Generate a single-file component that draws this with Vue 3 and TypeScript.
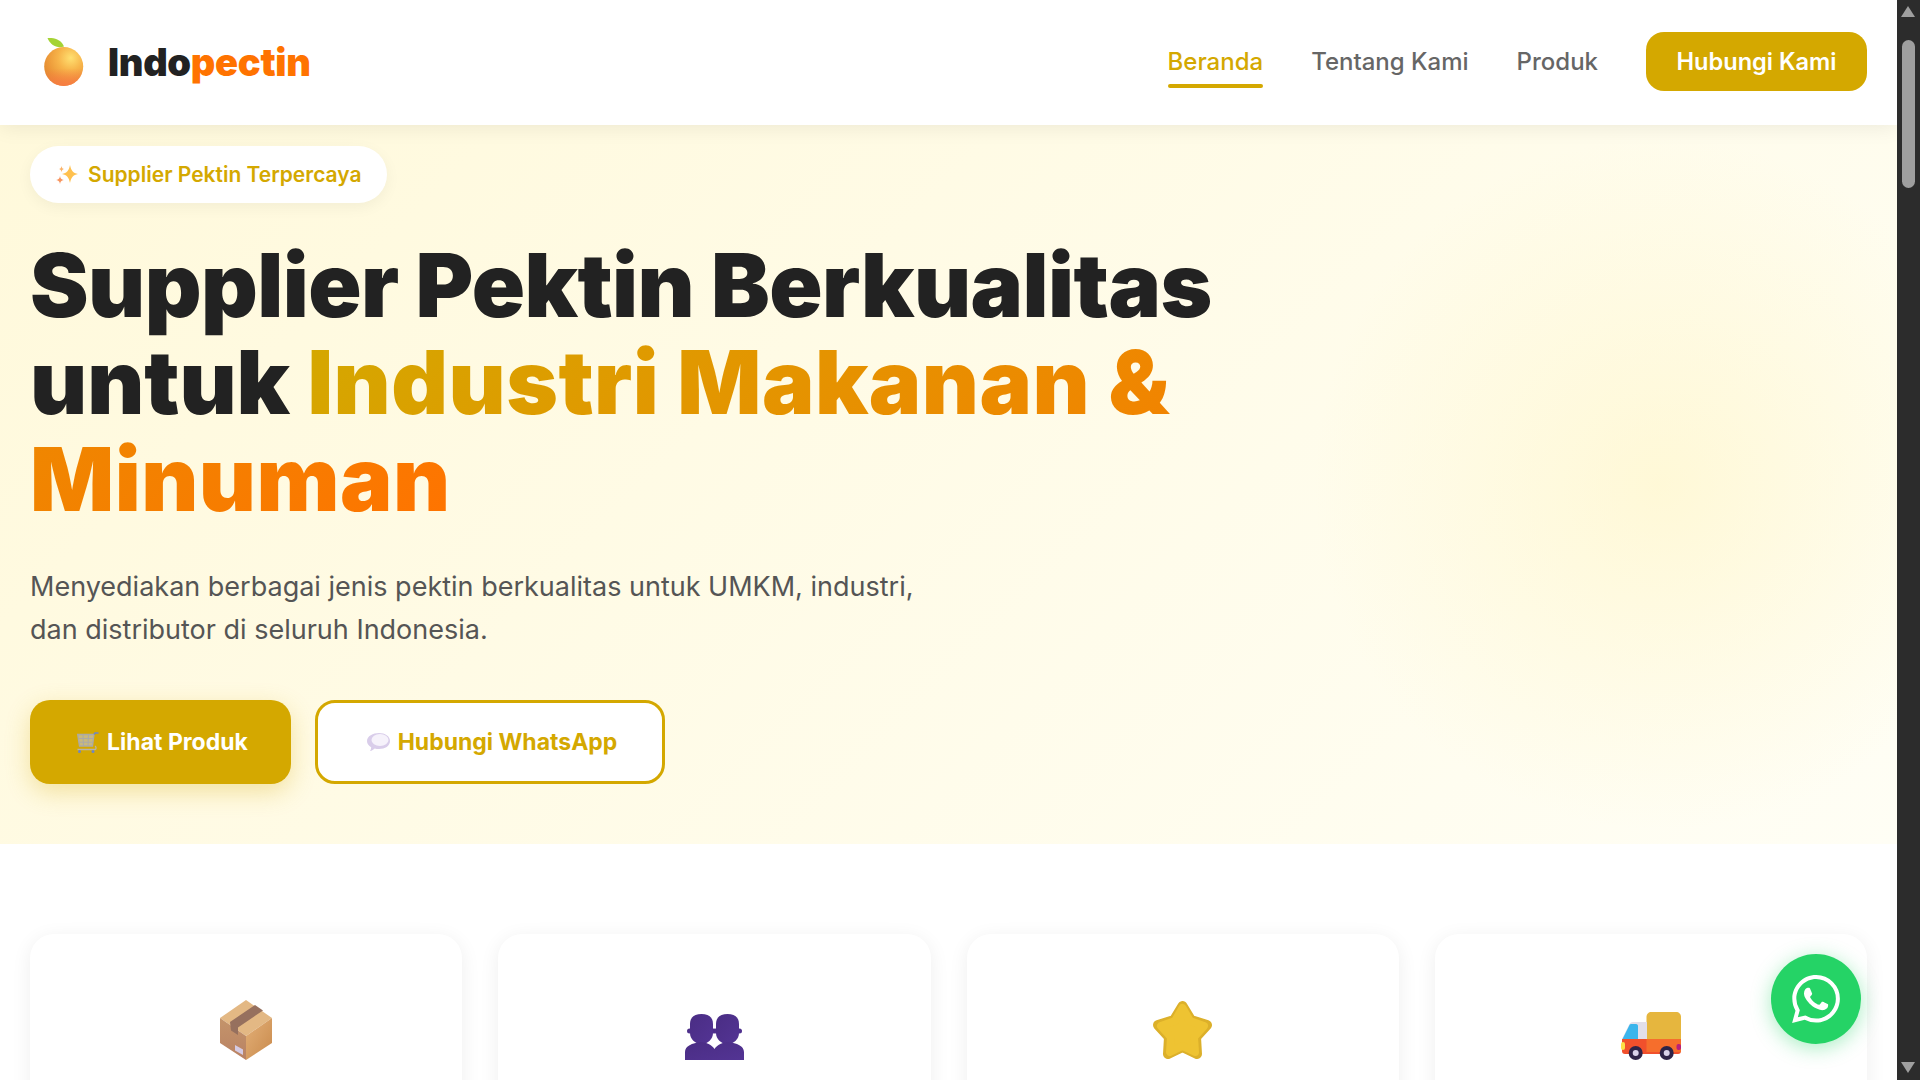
<script setup lang="ts">
const navLinks = [
  { label: 'Beranda', active: true },
  { label: 'Tentang Kami', active: false },
  { label: 'Produk', active: false },
]
</script>

<template>
  <div class="shell">
    <main class="page">
      <header class="navbar">
        <a class="logo">
          <svg class="logo-icon" viewBox="0 0 40 48">
            <defs>
              <radialGradient id="orangeFill" cx="0.68" cy="0.28" r="0.8">
                <stop offset="0" stop-color="#ffe071" />
                <stop offset="0.4" stop-color="#f7b44a" />
                <stop offset="0.8" stop-color="#ea9436" />
                <stop offset="1" stop-color="#dd8a2e" />
              </radialGradient>
              <linearGradient id="orangeBottom" x1="0" y1="0" x2="0" y2="1">
                <stop offset="0.55" stop-color="#fa7a45" stop-opacity="0" />
                <stop offset="1" stop-color="#fa7a45" stop-opacity="0.9" />
              </linearGradient>
            </defs>
            <circle cx="19.700" cy="28.500" r="19.500" fill="url(#orangeFill)" />
            <circle cx="19.700" cy="28.500" r="19.500" fill="url(#orangeBottom)" />
            <path d="M3.500 0c7-.6 14 2 16.500 8.500C13 10.500 6 7 3.500 0z" fill="#a5d335" />
          </svg>
          <span class="logo-text">Indo<span class="logo-accent">pectin</span></span>
        </a>
        <nav class="nav">
          <a v-for="link in navLinks" :key="link.label" class="nav-link" :class="{ active: link.active }">{{ link.label }}</a>
          <a class="nav-cta">Hubungi Kami</a>
        </nav>
      </header>

      <section class="hero">
        <div class="hero-glow"></div>
        <div class="badge">
          <svg class="badge-icon" viewBox="0 0 22 20">
            <path d="M14 0c1.200 5.800 3 7.800 8 9-5 1.200-6.800 3.200-8 9-1.200-5.800-3-7.800-8-9 5-1.200 6.800-3.200 8-9z" fill="#ffc14f" />
            <path d="M5.500 1c.4 2 1 2.700 2.800 3.100-1.800.4-2.400 1.100-2.800 3.100-.4-2-1-2.700-2.800-3.100 1.800-.4 2.400-1.100 2.800-3.100z" fill="#fbb268" />
            <path d="M4 11c.5 2.600 1.300 3.500 3.800 4-2.500.5-3.300 1.400-3.800 4-.5-2.600-1.300-3.500-3.800-4 2.500-.5 3.300-1.400 3.800-4z" fill="#f89660" />
          </svg>
          <span>Supplier Pektin Terpercaya</span>
        </div>
        <h1 class="title">
          <span class="title-first">Supplier Pektin Berkualitas</span><br />untuk <span class="title-accent">Industri Makanan &amp; Minuman</span>
        </h1>
        <p class="subtitle">
          Menyediakan berbagai jenis pektin berkualitas untuk UMKM, industri,<br />dan distributor di seluruh Indonesia.
        </p>
        <div class="actions">
          <a class="btn btn-primary">
            <svg class="btn-icon" viewBox="0 0 22 21">
              <path d="M.7 2.500H17L15.500 14H2.500z" fill="#c9b97c" stroke="#acaaa6" stroke-width="1.300" />
              <path d="M1.200 6.500h15.300M1.800 10.300h14.200M6 2.500l.5 11.500M11.500 2.500L11 14" stroke="#acaaa6" stroke-width="1.100" fill="none" />
              <path d="M17 2.500l1-1.500h3.500" stroke="#6f86c4" stroke-width="1.600" fill="none" />
              <path d="M.5 17.500H18c1.400-.3 1.400-2.800 0-3.500" stroke="#b7b4ac" stroke-width="1.300" fill="none" />
              <circle cx="2.500" cy="19.500" r="1.500" fill="#6f86c4" />
              <circle cx="16" cy="19.500" r="1.500" fill="#6f86c4" />
            </svg>
            Lihat Produk
          </a>
          <a class="btn btn-outline">
            <svg class="btn-icon bubble" viewBox="0 0 23 18">
              <path d="M12 0c6 0 11 3 11 8s-5 8-11 8c-1.500 0-3-.2-4.300-.6C6.500 16.600 5 17.600 3 18c.8-1 1.200-2.200 1.200-3.700C1.600 12.900 0 10.600 0 8c0-5 6-8 12-8z" fill="#d9cdea" />
              <ellipse cx="13" cy="7" rx="8.500" ry="6" fill="#f6f2fb" />
            </svg>
            Hubungi WhatsApp
          </a>
        </div>
      </section>

      <section class="features">
        <article class="card">
          <svg class="card-icon" viewBox="0 0 52 60" width="52" height="60">
            <defs>
              <linearGradient id="boxLeft" x1="0" y1="0" x2="0" y2="1">
                <stop offset="0" stop-color="#c4946a" />
                <stop offset="1" stop-color="#b98264" />
              </linearGradient>
              <linearGradient id="boxRight" x1="0" y1="0" x2="1" y2="1">
                <stop offset="0" stop-color="#e3b078" />
                <stop offset="1" stop-color="#c98a4c" />
              </linearGradient>
            </defs>
            <path d="M26 0l26 18L26 36 0 18z" fill="#e3b884" />
            <path d="M0 18l26 18v24L0 43z" fill="url(#boxLeft)" />
            <path d="M26 36l26-18v25L26 60z" fill="url(#boxRight)" />
            <path d="M10 22L35 5l8 5.500L18 27.500V35l-7-4.500z" fill="#96705e" />
            <path d="M15 45l8 4.500V55l-8-4.500z" fill="#d5cbe4" />
          </svg>
        </article>
        <article class="card">
          <svg class="card-icon" viewBox="0 0 59 46" width="59" height="46">
            <defs>
              <linearGradient id="peopleFill" x1="0" y1="0" x2="1" y2="1">
                <stop offset="0" stop-color="#4a2d84" />
                <stop offset="1" stop-color="#533494" />
              </linearGradient>
            </defs>
            <g fill="url(#peopleFill)">
              <circle cx="4.500" cy="17" r="2.500" />
              <circle cx="28.500" cy="17" r="2.500" />
              <circle cx="30.500" cy="17" r="2.500" />
              <circle cx="54.500" cy="17" r="2.500" />
              <path d="M16.500 0c7 0 11.500 3 11.500 10v9c0 6-5 11-11.500 11S5 25 5 19v-9C5 3 9.500 0 16.500 0z" />
              <path d="M42.500 0c7 0 11.500 3 11.500 10v9c0 6-5 11-11.500 11S31 25 31 19v-9c0-7 4.500-10 11.500-10z" />
              <path d="M0 46v-8c0-6 7-9 16-10 5 0 11 3 13.500 7 2.500-4 8.500-7 13.500-7 9 1 16 4 16 10v8z" />
            </g>
          </svg>
        </article>
        <article class="card">
          <svg class="card-icon" viewBox="0 0 60 60" width="60" height="60">
            <path d="M29.500 6L38 20l16 5-11 12 1 17-14.500-7L15 54l1-17L5 25l16-5z" fill="#dcb02a" stroke="#dcb02a" stroke-width="10" stroke-linejoin="round" />
            <path d="M29.500 8L37 21l14 5-10 11 1 15-12.500-6L17 52l1-15L8 26l14-5z" fill="#eec332" stroke="#eec332" stroke-width="8" stroke-linejoin="round" />
          </svg>
        </article>
        <article class="card">
          <svg class="card-icon" viewBox="0 0 60 48" width="60" height="48">
            <path d="M25.500 29V5c0-3 2-5 5-5H55c3 0 5 2 5 5v24z" fill="#e6b63e" />
            <path d="M26 10H12c-2 0-3 1-4 3L1 27v2h25z" fill="#e2dfea" />
            <path d="M10 12h5c1.500 0 2 1 2 2v13H1.500L8 14c.5-1.300 1-2 2-2z" fill="#3bb5ec" />
            <path d="M1 27h59v12c0 2-1 3-3 3H4c-2 0-3-1-3-3z" fill="#f1502c" />
            <path d="M25.500 27H60v13H25.500z" fill="#f66e2c" />
            <rect x="0" y="30" width="4" height="8" rx="2" fill="#fde047" />
            <rect x="55.500" y="32" width="4.500" height="6" rx="2" fill="#b81f7a" />
            <circle cx="14.700" cy="41" r="7" fill="#2e2448" />
            <circle cx="14.700" cy="41" r="3" fill="#d9d2ea" />
            <circle cx="45.700" cy="41" r="7" fill="#2e2448" />
            <circle cx="45.700" cy="41" r="3" fill="#d9d2ea" />
          </svg>
        </article>
      </section>

      <a class="wa-float" aria-label="WhatsApp">
        <svg viewBox="0 0 24 24" width="48" height="48">
          <path fill="#fff" d="M17.472 14.382c-.297-.149-1.758-.867-2.030-.967-.273-.099-.471-.148-.670.150-.197.297-.767.966-.940 1.164-.173.199-.347.223-.644.075-.297-.150-1.255-.463-2.390-1.475-.883-.788-1.480-1.761-1.653-2.059-.173-.297-.018-.458.130-.606.134-.133.298-.347.446-.520.149-.174.198-.298.298-.497.099-.198.050-.371-.025-.520-.075-.149-.669-1.612-.916-2.207-.242-.579-.487-.500-.669-.510-.173-.008-.371-.010-.570-.010-.198 0-.520.074-.792.372-.272.297-1.040 1.016-1.040 2.479 0 1.462 1.065 2.875 1.213 3.074.149.198 2.096 3.200 5.077 4.487.709.306 1.262.489 1.694.625.712.227 1.360.195 1.871.118.571-.085 1.758-.719 2.006-1.413.248-.694.248-1.289.173-1.413-.074-.124-.272-.198-.570-.347m-5.421 7.403h-.004a9.870 9.870 0 01-5.031-1.378l-.361-.214-3.741.982.998-3.648-.235-.374a9.860 9.860 0 01-1.510-5.260c.001-5.450 4.436-9.884 9.888-9.884 2.640 0 5.122 1.030 6.988 2.898a9.825 9.825 0 012.893 6.994c-.003 5.450-4.437 9.884-9.885 9.884m8.413-18.297A11.815 11.815 0 0012.050 0C5.495 0 .160 5.335.157 11.892c0 2.096.547 4.142 1.588 5.945L.057 24l6.305-1.654a11.882 11.882 0 005.683 1.448h.005c6.554 0 11.890-5.335 11.893-11.893a11.821 11.821 0 00-3.480-8.413z" />
        </svg>
      </a>
    </main>

    <!-- scrollbar as in the reference -->
    <aside class="scrollbar">
      <span class="arrow arrow-up"></span>
      <span class="thumb"></span>
      <span class="arrow arrow-down"></span>
    </aside>
  </div>
</template>

<style>
html, body {
  margin: 0;
  height: 100%;
  overflow: hidden;
}
</style>

<style scoped>
.shell {
  display: flex;
  height: 100vh;
  font-family: Inter, "Liberation Sans", sans-serif;
  color: #222;
  background: #fff;
}

.page {
  position: relative;
  flex: 1;
  min-width: 0;
  overflow: hidden;
}

/* navbar */
.navbar {
  position: relative;
  z-index: 2;
  display: flex;
  align-items: center;
  justify-content: space-between;
  box-sizing: border-box;
  height: 125px;
  padding: 0 30px 2px;
  background: #fff;
  box-shadow: 0 2px 20px rgba(0, 0, 0, 0.08);
}

.logo {
  display: flex;
  align-items: center;
  gap: 24px;
  padding-left: 14px;
}

.logo-icon {
  width: 40px;
  height: 48px;
}

.logo-text {
  font-size: 38px;
  font-weight: 900;
  letter-spacing: -0.3px;
  color: #222;
}

.logo-accent {
  color: #ff7300;
}

.nav {
  display: flex;
  align-items: center;
  gap: 48px;
}

.nav-link {
  position: relative;
  font-size: 24px;
  font-weight: 500;
  color: #666;
}

.nav-link.active {
  color: #d4a800;
}

.nav-link.active::after {
  content: "";
  position: absolute;
  left: 0;
  right: 0;
  bottom: -12px;
  height: 4px;
  border-radius: 2px;
  background: #d4a800;
}

.nav-cta {
  display: flex;
  align-items: center;
  justify-content: center;
  width: 221px;
  height: 59px;
  border-radius: 18px;
  background: #d4a800;
  color: #fff;
  font-size: 23.6px;
  font-weight: 600;
}

/* hero */
.hero {
  position: relative;
  height: 719px;
  box-sizing: border-box;
  padding: 21px 30px 0;
  background: linear-gradient(135deg, #fff9db 0%, #fffef5 100%);
  overflow: hidden;
}

.hero-glow {
  position: absolute;
  left: 1310px;
  top: 9px;
  width: 700px;
  height: 700px;
  border-radius: 50%;
  background: radial-gradient(circle, rgba(255, 240, 170, 0.35) 0%, rgba(255, 240, 170, 0) 70%);
}

.badge {
  position: relative;
  display: inline-flex;
  align-items: center;
  gap: 10px;
  height: 57px;
  padding: 0 25px 0 26px;
  border-radius: 29px;
  background: #fff;
  box-shadow: 0 4px 15px rgba(0, 0, 0, 0.05);
  color: #d4a800;
  font-size: 21px;
  font-weight: 600;
}

.badge-icon {
  width: 22px;
  height: 20px;
}

.title {
  position: relative;
  max-width: 1300px;
  margin: 34px 0 0;
  font-size: 88px;
  font-weight: 900;
  line-height: 97px;
  color: #222;
}

.title-first {
  letter-spacing: -0.55px;
}

.title-accent {
  letter-spacing: 0.5px;
  background: linear-gradient(135deg, #d4a800 0%, #ff7300 100%);
  -webkit-background-clip: text;
  background-clip: text;
  color: transparent;
}

.subtitle {
  position: relative;
  margin: 37px 0 0;
  font-size: 27px;
  line-height: 43px;
  color: #555;
}

.actions {
  position: relative;
  display: flex;
  gap: 24px;
  margin-top: 49px;
}

.btn {
  display: flex;
  align-items: center;
  justify-content: center;
  gap: 8px;
  box-sizing: border-box;
  height: 84px;
  padding-left: 4px;
  border-radius: 20px;
  font-size: 23px;
  font-weight: 700;
}

.btn-icon {
  width: 22px;
  height: 21px;
}

.bubble {
  width: 23px;
  height: 18px;
}

.btn-primary {
  width: 261px;
  background: #d4a800;
  color: #fff;
  box-shadow: 0 8px 25px rgba(212, 168, 0, 0.3);
}

.btn-outline {
  width: 350px;
  border: 3px solid #d4a800;
  background: #fff;
  color: #d4a800;
}

/* feature cards */
.features {
  display: grid;
  grid-template-columns: repeat(4, 1fr);
  gap: 36px;
  padding: 90px 30px 0;
}

.card {
  display: flex;
  justify-content: center;
  align-items: flex-end;
  box-sizing: border-box;
  height: 326px;
  padding-bottom: 200px;
  border-radius: 24px;
  background: #fff;
  box-shadow: 0 4px 20px rgba(0, 0, 0, 0.07);
}

.card-icon {
  display: block;
}

.wa-float {
  position: absolute;
  z-index: 3;
  right: 36px;
  bottom: 36px;
  display: flex;
  align-items: center;
  justify-content: center;
  width: 90px;
  height: 90px;
  border-radius: 50%;
  background: #25d366;
  box-shadow: 0 4px 20px rgba(37, 211, 102, 0.4);
}

/* scrollbar */
.scrollbar {
  position: relative;
  flex: 0 0 23px;
  background: #2c2c2c;
}

.thumb {
  position: absolute;
  left: 5px;
  top: 40px;
  width: 13px;
  height: 148px;
  border-radius: 7px;
  background: #9f9f9f;
}

.arrow {
  position: absolute;
  left: 4px;
  width: 0;
  height: 0;
  border-left: 7.5px solid transparent;
  border-right: 7.5px solid transparent;
}

.arrow-up {
  top: 6px;
  border-bottom: 11px solid #9f9f9f;
}

.arrow-down {
  bottom: 7px;
  border-top: 11px solid #9f9f9f;
}
</style>
